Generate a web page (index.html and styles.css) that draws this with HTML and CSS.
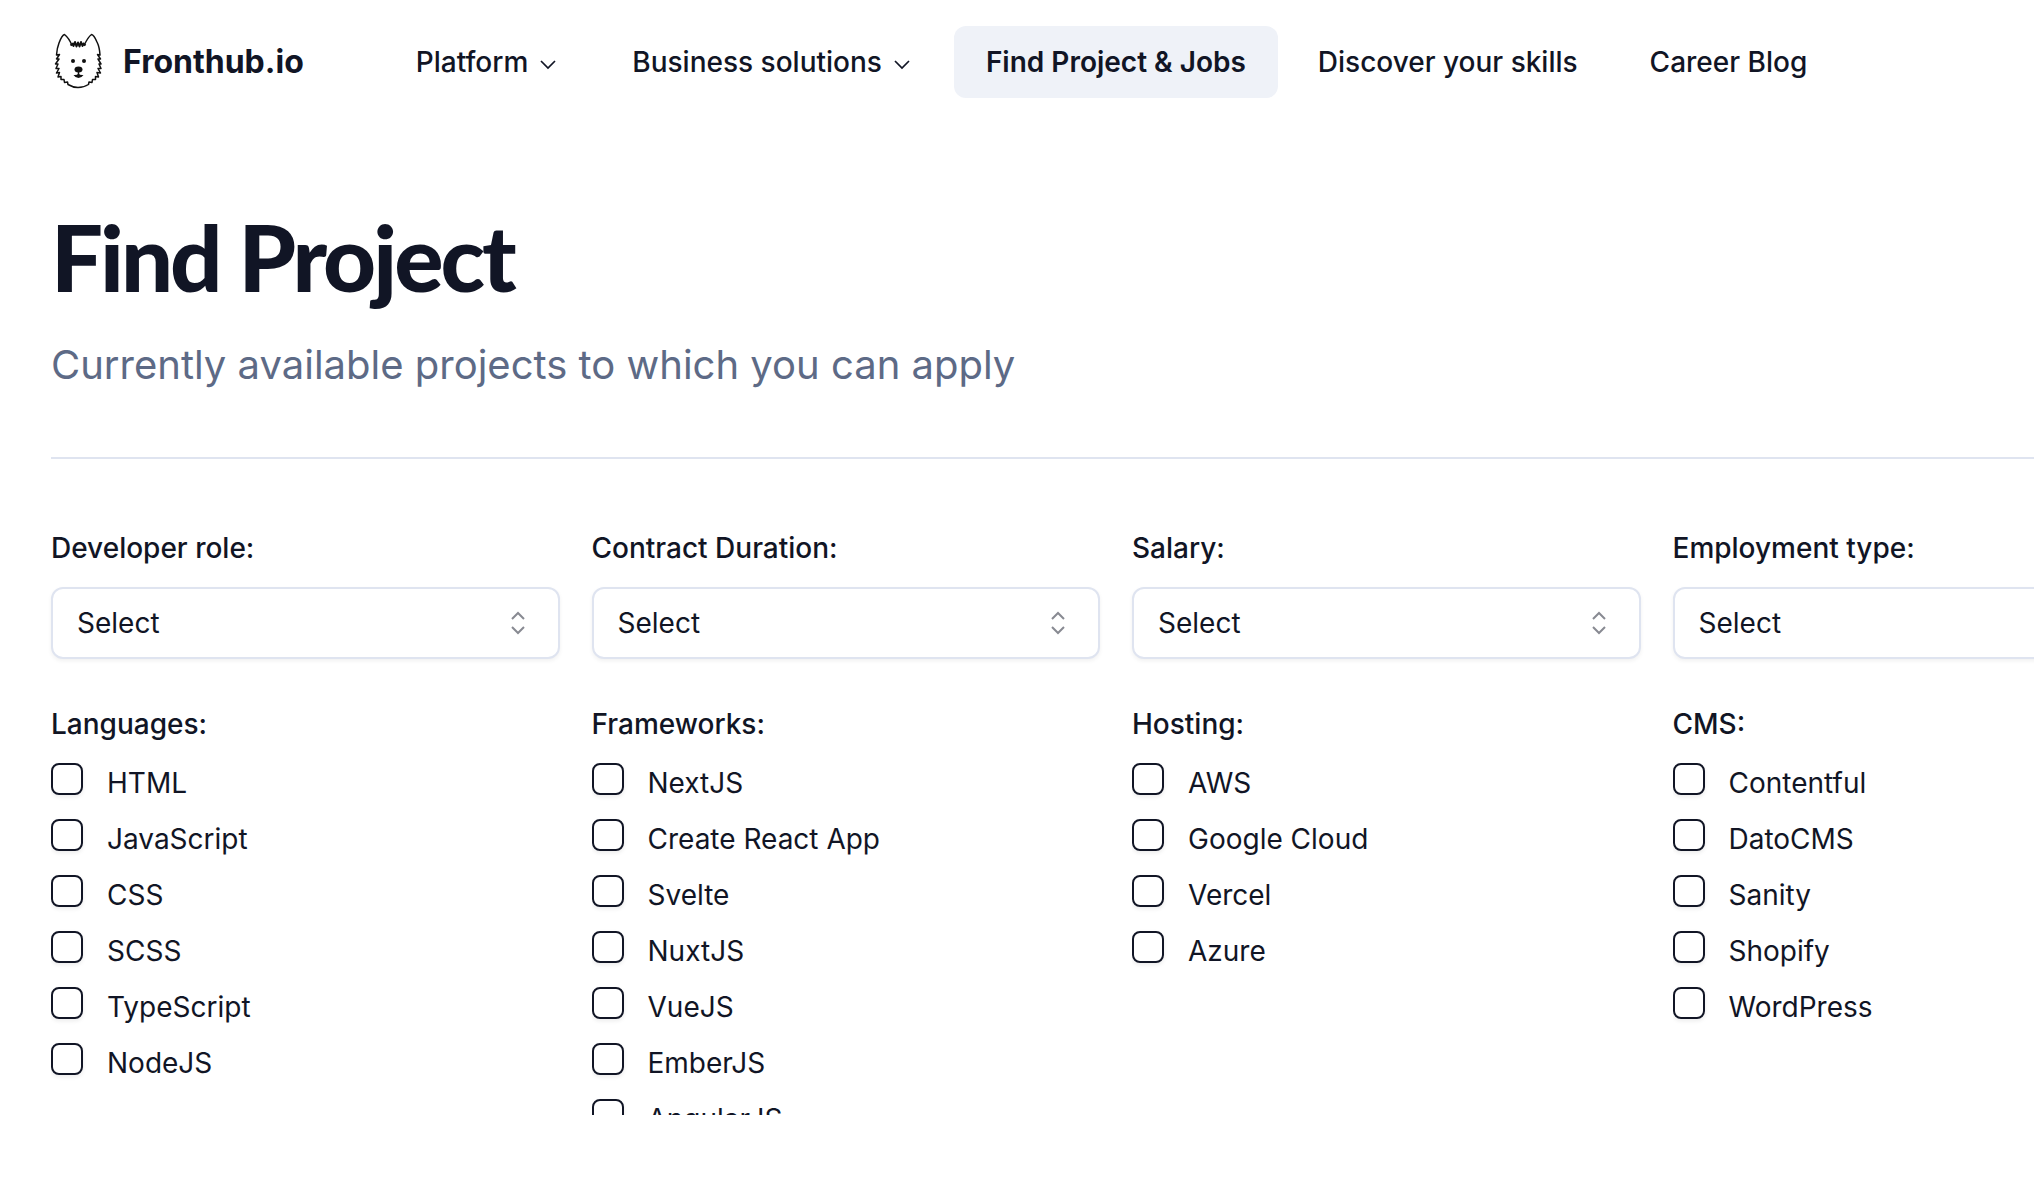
FILE: index.html
```html
<!DOCTYPE html>
<html lang="en">
<head>
<meta charset="utf-8">
<meta name="viewport" content="width=device-width, initial-scale=1">
<title>Find Project - Fronthub.io</title>
<link rel="stylesheet" href="styles.css">
</head>
<body>
<header class="header">
  <a class="logo" href="#">
    <svg class="logo-mark" viewBox="-4 0 56 58" aria-hidden="true">
      <path d="M17 12.500 Q14 5 9.500 1.500 Q7 2 4 10 Q2 15 1.500 22 L4.500 21.500 L1.500 26 L4 26 L.5 31 L3 31 L1 35.500 L4 35.500 L1.500 40 L4.500 39.500 L3 44 L6 43.500 L6 46.500 L9 46.500 L9.500 49.500 L12.500 49 L13 51.500 Q18 54.500 23 54.500 Q29 54.500 33.500 51.500 L34 49 L37 49.500 L37.500 46.500 L40.500 46.500 L40.500 43.500 L43.500 44 L42 39.500 L45.500 40 L43 35.500 L46 35.500 L44 31 L46 31 L43 26 L45.500 26 L42.500 21.500 L45 22 Q44.500 14 42 9 Q39 2 36.500 1.500 Q33 4 29 12.500" />
      <path stroke-width="2" d="M15.500 12.500 L18 10.500 L18.500 13 L20 9 L21.500 13.500 L23 9.500 L24.500 13.500 L26 9 L27.500 13 L28.500 10.500 L30.500 12.500" />
      <circle class="fill" cx="18" cy="28" r="2"/><circle class="fill" cx="29" cy="28" r="2"/>
      <ellipse class="fill" cx="23.500" cy="36.500" rx="4" ry="3"/>
      <path d="M23.500 39 V42"/>
      <path class="fill" d="M18.500 42 Q22 42.500 23.500 40.500 Q25 42.500 28.500 42 Q26.500 45 23.500 45 Q20.500 45 18.500 42Z"/>
    </svg>
    <span>Fronthub.io</span>
  </a>
  <nav class="nav" aria-label="Main">
    <button class="nav-item" type="button">Platform
      <svg class="chevron" viewBox="0 0 24 24" aria-hidden="true"><path d="M5 11l7 7 7-7"/></svg></button>
    <button class="nav-item" type="button">Business solutions
      <svg class="chevron" viewBox="0 0 24 24" aria-hidden="true"><path d="M5 11l7 7 7-7"/></svg></button>
    <a class="nav-item nav-item-active" href="#" aria-current="page">Find Project &amp; Jobs</a>
    <a class="nav-item" href="#">Discover your skills</a>
    <a class="nav-item" href="#">Career Blog</a>
  </nav>
</header>
<main class="main">
  <h1 class="title">Find Project</h1>
  <p class="subtitle">Currently available projects to which you can apply</p>
  <hr class="rule">
  <form class="filters">
    <div class="field">
      <label class="label" for="role">Developer role:</label>
      <div class="select"><select id="role"><option>Select</option></select>
        <svg viewBox="0 0 32 32" aria-hidden="true"><path d="M10 12l6-6 6 6M10 20l6 6 6-6"/></svg></div>
    </div>
    <div class="field">
      <label class="label" for="duration">Contract Duration:</label>
      <div class="select"><select id="duration"><option>Select</option></select>
        <svg viewBox="0 0 32 32" aria-hidden="true"><path d="M10 12l6-6 6 6M10 20l6 6 6-6"/></svg></div>
    </div>
    <div class="field">
      <label class="label" for="salary">Salary:</label>
      <div class="select"><select id="salary"><option>Select</option></select>
        <svg viewBox="0 0 32 32" aria-hidden="true"><path d="M10 12l6-6 6 6M10 20l6 6 6-6"/></svg></div>
    </div>
    <div class="field">
      <label class="label" for="employment">Employment type:</label>
      <div class="select"><select id="employment"><option>Select</option></select>
        <svg viewBox="0 0 32 32" aria-hidden="true"><path d="M10 12l6-6 6 6M10 20l6 6 6-6"/></svg></div>
    </div>
    <fieldset class="group">
      <legend class="label">Languages:</legend>
      <div class="options">
        <label class="option"><input type="checkbox">HTML</label>
        <label class="option"><input type="checkbox">JavaScript</label>
        <label class="option"><input type="checkbox">CSS</label>
        <label class="option"><input type="checkbox">SCSS</label>
        <label class="option"><input type="checkbox">TypeScript</label>
        <label class="option"><input type="checkbox">NodeJS</label>
      </div>
    </fieldset>
    <fieldset class="group">
      <legend class="label">Frameworks:</legend>
      <div class="options">
        <label class="option"><input type="checkbox">NextJS</label>
        <label class="option"><input type="checkbox">Create React App</label>
        <label class="option"><input type="checkbox">Svelte</label>
        <label class="option"><input type="checkbox">NuxtJS</label>
        <label class="option"><input type="checkbox">VueJS</label>
        <label class="option"><input type="checkbox">EmberJS</label>
        <label class="option"><input type="checkbox">AngularJS</label>
      </div>
    </fieldset>
    <fieldset class="group">
      <legend class="label">Hosting:</legend>
      <div class="options">
        <label class="option"><input type="checkbox">AWS</label>
        <label class="option"><input type="checkbox">Google Cloud</label>
        <label class="option"><input type="checkbox">Vercel</label>
        <label class="option"><input type="checkbox">Azure</label>
      </div>
    </fieldset>
    <fieldset class="group">
      <legend class="label">CMS:</legend>
      <div class="options">
        <label class="option"><input type="checkbox">Contentful</label>
        <label class="option"><input type="checkbox">DatoCMS</label>
        <label class="option"><input type="checkbox">Sanity</label>
        <label class="option"><input type="checkbox">Shopify</label>
        <label class="option"><input type="checkbox">WordPress</label>
      </div>
    </fieldset>
  </form>
</main>
</body>
</html>
```
FILE: styles.css
```css
*, *::before, *::after { box-sizing: border-box; }

body {
  margin: 0;
  overflow-x: hidden;
  background: #fff;
  color: #111525;
  font: 400 28px/28px Inter, "Liberation Sans", sans-serif;
}

.header {
  display: flex;
  align-items: center;
  gap: 80px;
  padding: 26px 51px;
}

.logo {
  display: flex;
  align-items: center;
  gap: 16px;
  color: inherit;
  font-size: 32px;
  font-weight: 700;
  line-height: 40px;
  text-decoration: none;
}

.logo-mark {
  width: 56px;
  height: 58px;
  fill: none;
  stroke: #111;
  stroke-width: 1.5;
  stroke-linejoin: round;
}

.logo-mark .fill { fill: #111; stroke: none; }

.nav { display: flex; gap: 8px; }

.nav-item {
  display: flex;
  align-items: center;
  gap: 8px;
  height: 72px;
  padding: 0 32px;
  border: 0;
  border-radius: 12px;
  background: none;
  color: inherit;
  font: inherit;
  font-weight: 500;
  text-decoration: none;
  white-space: nowrap;
}

.nav-item-active { background: #eff2f8; font-weight: 600; }

.chevron {
  width: 24px;
  height: 24px;
  fill: none;
  stroke: currentColor;
  stroke-width: 1.7;
}

.main { padding: 85px 0 0 51px; }

.title {
  margin: 0 0 32px;
  font: 900 92px/96px Lato, Inter, sans-serif;
  letter-spacing: -3px;
}

.subtitle {
  margin: 0 0 64px;
  color: #5d6a86;
  font-size: 40px;
  line-height: 56px;
}

.rule {
  height: 2px;
  margin: 0 0 75px;
  border: 0;
  background: #dfe4f0;
}

.filters {
  display: grid;
  grid-template-columns: repeat(4, 25vw);
  gap: 51px 32px;
}

.label {
  display: block;
  margin-bottom: 25px;
  padding: 0;
  font-weight: 500;
}

.select { display: grid; align-items: center; }

.select select {
  grid-area: 1 / 1;
  width: 100%;
  height: 72px;
  padding: 0 24px;
  border: 2px solid #dfe4f0;
  border-radius: 12px;
  appearance: none;
  background: #fff;
  box-shadow: 0 2px 4px rgb(0 0 0 / 6%);
  color: inherit;
  font: inherit;
}

.select svg {
  grid-area: 1 / 1;
  justify-self: end;
  width: 32px;
  height: 32px;
  margin-right: 26px;
  fill: none;
  stroke: #888a92;
  stroke-width: 2;
  pointer-events: none;
}

.group { min-width: 0; margin: 0; padding: 0; border: 0; }

.options {
  display: flex;
  flex-direction: column;
  gap: 16px;
  max-height: 352px;
  overflow-y: auto;
  scrollbar-width: none;
}

.option {
  display: flex;
  flex: none;
  gap: 24px;
  line-height: 40px;
}

.option input {
  width: 32px;
  height: 32px;
  margin: 0;
  border: 2px solid #111525;
  border-radius: 8px;
  appearance: none;
  box-shadow: 0 2px 4px rgb(0 0 0 / 8%);
}

.option input:checked { background: #111525; }
```
